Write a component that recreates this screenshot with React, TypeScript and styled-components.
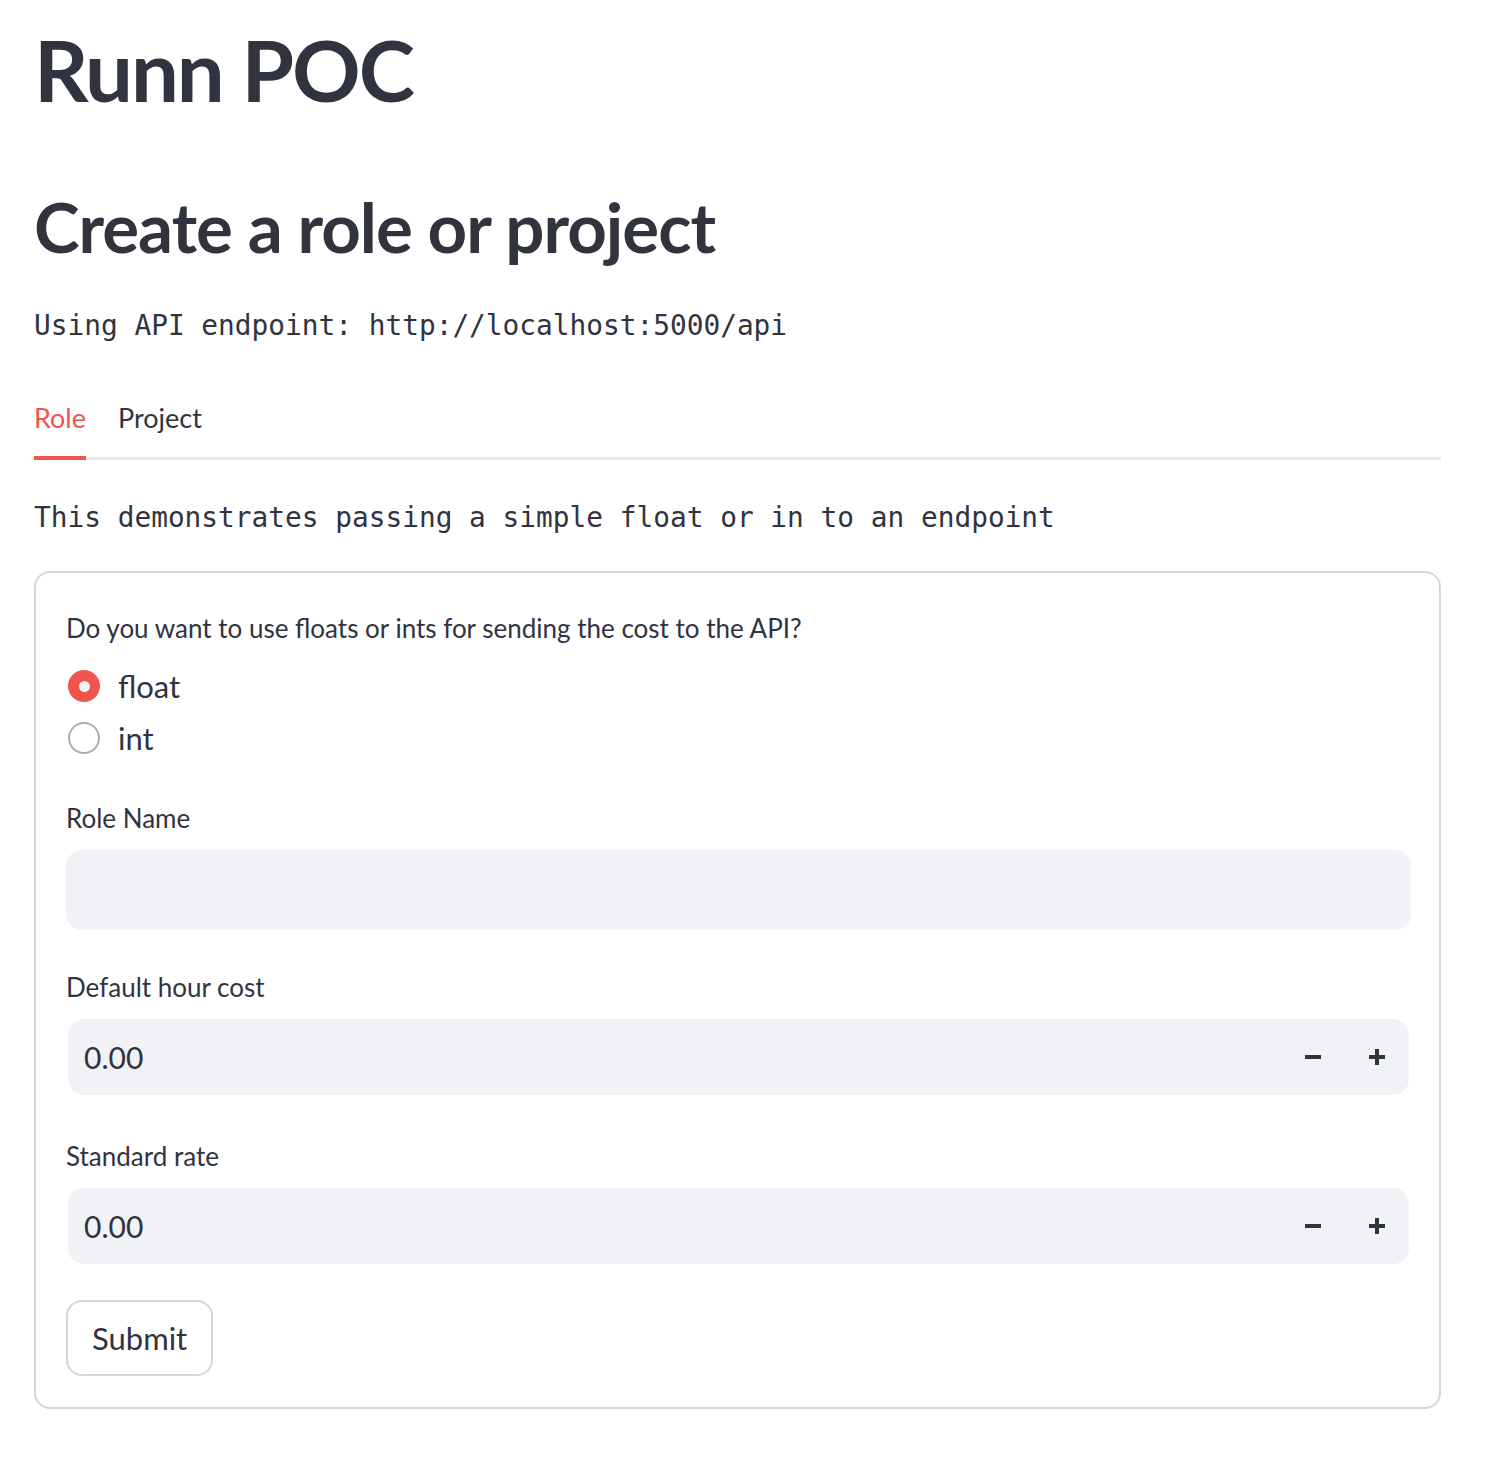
import React, { useState } from 'react';
import styled, { createGlobalStyle } from 'styled-components';

const GlobalStyle = createGlobalStyle`
  body {
    margin: 0;
    background: #ffffff;
    color: #31333f;
    font-family: Lato, "Noto Sans", sans-serif;
  }
`;

const Page = styled.main`
  width: 1407px;
  padding: 0 0 60px 34px;
`;

const Title = styled.h1`
  margin: 0;
  padding-top: 14px;
  font-size: 85px;
  line-height: 110px;
  font-weight: 700;
  letter-spacing: -2px;
`;

const Heading = styled.h2`
  margin: 62px 0 0;
  font-size: 69px;
  line-height: 82px;
  font-weight: 700;
  letter-spacing: -1px;
`;

const Mono = styled.p<{ $gap: number }>`
  margin: ${(p) => p.$gap}px 0 0;
  font-family: "DejaVu Sans Mono", "Liberation Mono", monospace;
  font-size: 27.8px;
  line-height: 40px;
  white-space: pre;
`;

const TabBar = styled.div`
  display: flex;
  gap: 32px;
  margin-top: 52px;
  border-bottom: 3px solid #e8e8ea;
`;

const Tab = styled.button<{ $active?: boolean }>`
  background: none;
  border: none;
  padding: 0 0 18px;
  margin-bottom: -3px;
  font-family: Lato, "Noto Sans", sans-serif;
  font-size: 27px;
  line-height: 40px;
  color: ${(p) => (p.$active ? '#f0544f' : '#31333f')};
  border-bottom: 4px solid ${(p) => (p.$active ? '#f0544f' : 'transparent')};
  cursor: pointer;
`;

const Form = styled.form`
  margin-top: 33px;
  border: 2px solid #d6d6d9;
  border-radius: 16px;
  padding: 35px 28px 31px 30px;
  display: flex;
  flex-direction: column;
`;

const Label = styled.div`
  font-size: 26px;
  line-height: 40px;
`;

const RadioGroup = styled.div`
  display: flex;
  flex-direction: column;
  gap: 12px;
  margin-top: 18px;
`;

const RadioRow = styled.label`
  display: flex;
  align-items: center;
  gap: 18px;
  padding-left: 2px;
  font-size: 31px;
  line-height: 40px;
  cursor: pointer;
`;

const RadioDot = styled.span<{ $checked?: boolean }>`
  box-sizing: border-box;
  width: 32px;
  height: 32px;
  border-radius: 50%;
  display: flex;
  align-items: center;
  justify-content: center;
  background: ${(p) => (p.$checked ? '#f0544f' : '#ffffff')};
  border: 2px solid ${(p) => (p.$checked ? '#f0544f' : '#a9acb6')};
  &::after {
    content: '';
    width: 11px;
    height: 11px;
    border-radius: 50%;
    background: #f0f2f6;
    display: ${(p) => (p.$checked ? 'block' : 'none')};
  }
`;

const Field = styled.div<{ $gap: number }>`
  margin-top: ${(p) => p.$gap}px;
  display: flex;
  flex-direction: column;
  gap: 12px;
`;

const TextBox = styled.input`
  box-sizing: border-box;
  height: 80px;
  border: none;
  border-radius: 16px;
  background: #f0f2f6;
  padding: 0 20px;
  font-family: Lato, "Noto Sans", sans-serif;
  font-size: 30px;
  color: #31333f;
  outline: none;
`;

const NumberBox = styled.div`
  height: 76px;
  margin: 0 2px;
  border-radius: 16px;
  background: #f0f2f6;
  display: flex;
  align-items: center;
  padding: 0 0 0 16px;
`;

const NumberValue = styled.span`
  flex: 1;
  font-size: 30px;
`;

const StepButton = styled.button`
  width: 64px;
  height: 64px;
  border: none;
  background: none;
  display: flex;
  align-items: center;
  justify-content: center;
  color: #31333f;
  cursor: pointer;
`;

const SubmitButton = styled.button`
  align-self: flex-start;
  margin-top: 36px;
  height: 76px;
  padding: 0 24px;
  border: 2px solid #d6d6d9;
  border-radius: 16px;
  background: #ffffff;
  font-family: Lato, "Noto Sans", sans-serif;
  font-size: 31px;
  color: #31333f;
  cursor: pointer;
`;

const Minus = () => (
  <svg width="16" height="4" viewBox="0 0 16 4">
    <rect x="0" y="0" width="16" height="4" fill="currentColor" />
  </svg>
);

const Plus = () => (
  <svg width="16" height="16" viewBox="0 0 16 16">
    <rect x="0" y="6" width="16" height="4" fill="currentColor" />
    <rect x="6" y="0" width="4" height="16" fill="currentColor" />
  </svg>
);

const NumberField = ({ label, gap }: { label: string; gap: number }) => (
  <Field $gap={gap}>
    <Label>{label}</Label>
    <NumberBox>
      <NumberValue>0.00</NumberValue>
      <StepButton type="button"><Minus /></StepButton>
      <StepButton type="button"><Plus /></StepButton>
    </NumberBox>
  </Field>
);

export default function App() {
  const [tab, setTab] = useState('Role');
  const [kind, setKind] = useState('float');

  return (
    <Page>
      <GlobalStyle />
      <Title>Runn POC</Title>
      <Heading>Create a role or project</Heading>
      <Mono $gap={38}>Using API endpoint: http://localhost:5000/api</Mono>
      <TabBar>
        {['Role', 'Project'].map((t) => (
          <Tab key={t} $active={tab === t} onClick={() => setTab(t)}>{t}</Tab>
        ))}
      </TabBar>
      <Mono $gap={38}>This demonstrates passing a simple float or in to an endpoint</Mono>
      <Form onSubmit={(e) => e.preventDefault()}>
        <Label>Do you want to use floats or ints for sending the cost to the API?</Label>
        <RadioGroup>
          {['float', 'int'].map((k) => (
            <RadioRow key={k} onClick={() => setKind(k)}>
              <RadioDot $checked={kind === k} />
              {k}
            </RadioRow>
          ))}
        </RadioGroup>
        <Field $gap={40}>
          <Label>Role Name</Label>
          <TextBox />
        </Field>
        <NumberField label="Default hour cost" gap={37} />
        <NumberField label="Standard rate" gap={41} />
        <SubmitButton type="submit">Submit</SubmitButton>
      </Form>
    </Page>
  );
}
